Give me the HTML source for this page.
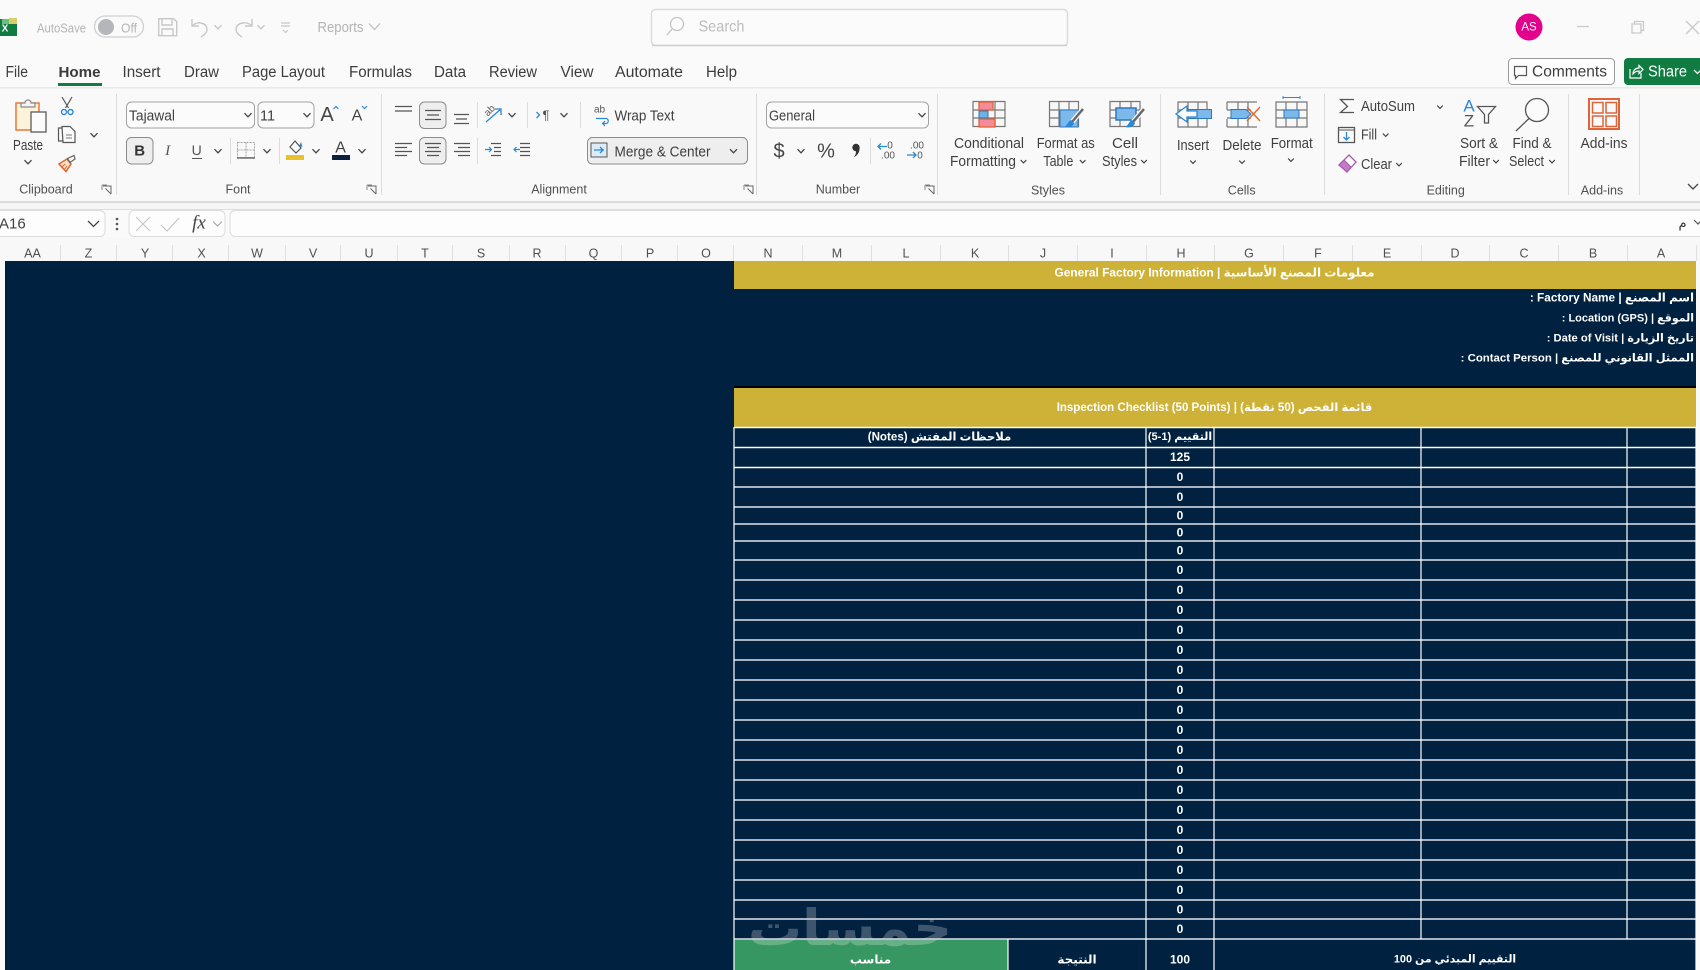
<!DOCTYPE html>
<html lang="en"><head><meta charset="utf-8"><title>Excel</title>
<style>
html,body{margin:0;padding:0;width:1700px;height:970px;overflow:hidden;background:#fafafa}
svg{display:block;position:absolute;left:0;top:0;filter:blur(.3px)}
text{font-family:"Liberation Sans","DejaVu Sans",sans-serif;dominant-baseline:central;white-space:pre}
.m{text-anchor:middle}
.f{fill:#b4b4b4;font-size:13px}
.tab{fill:#3c3c3c;font-size:15.5px}
.r{fill:#404040;font-size:14.5px}
.g{fill:#505050;font-size:12.5px;text-anchor:middle}
.h{fill:#505050;font-size:12.5px;text-anchor:middle}
.w{fill:#fff;font-size:12px;font-weight:bold;font-family:"Liberation Sans","DejaVu Sans",sans-serif}
.n{fill:#fff;font-size:12px;font-weight:bold;text-anchor:middle}
</style></head><body>
<svg width="1700" height="970" viewBox="0 0 1700 970" xmlns="http://www.w3.org/2000/svg">
<defs>
<path id="c" d="M-3.500-1.800L0 1.800L3.500-1.800" fill="none" stroke="#444" stroke-width="1.300"/>
<path id="cs" d="M-2.800-1.400L0 1.400L2.800-1.400" fill="none" stroke="#444" stroke-width="1.200"/>
<path id="cf" d="M-3.500-1.800L0 1.800L3.500-1.800" fill="none" stroke="#c4c4c4" stroke-width="1.300"/>
<g id="l"><path d="M0 0h8v8M8 8L2.500 2.500" fill="none" stroke="#666" stroke-width="1"/><path d="M-1-1h5M-1-1v5" fill="none" stroke="#888" stroke-width="1"/></g>
</defs>

<!-- page base -->
<rect width="1700" height="970" fill="#fafafa"/>

<!-- title bar -->
<rect x="0" y="19" width="17" height="17" fill="#107c41"/>
<rect x="9" y="18" width="8" height="6" fill="#d9cf6a"/>
<rect x="2" y="19" width="7" height="5" fill="#6cbf84"/>
<text x="5" y="29" fill="#fff" class="m" style="font-size:10px;font-weight:bold">X</text>
<text x="37" y="28" class="f" textLength="49" lengthAdjust="spacingAndGlyphs">AutoSave</text>
<rect x="94.500" y="16" width="49" height="21" rx="10.500" fill="#fafafa" stroke="#cfcfcf" stroke-width="1.300"/>
<circle cx="106" cy="27" r="8" fill="#b4b6b9"/>
<text x="121" y="28" class="f" textLength="16" lengthAdjust="spacingAndGlyphs">Off</text>
<path d="M158.700 18.700h15l3 3v14h-18zM162 19v6h10v-6M162 36v-7h11v7" fill="none" stroke="#c8c8c8" stroke-width="1.400"/>
<path d="M192 19v7h7M192 26c5-5 14-4 15 3c0 4-3 6-6 8" fill="none" stroke="#c8c8c8" stroke-width="1.400"/>
<use href="#cf" x="218" y="27"/>
<path d="M252 19v7h-7M252 26c-5-5-15-4-16 3c0 4 3 6 6 8" fill="none" stroke="#c8c8c8" stroke-width="1.400"/>
<use href="#cf" x="261" y="27"/>
<path d="M281 23h9M281 26h9M283 30l2.500 2.500l2.500-2.500" fill="none" stroke="#c8c8c8" stroke-width="1.200"/>
<text x="317.500" y="28" class="f" style="font-size:14.500px" textLength="46" lengthAdjust="spacingAndGlyphs">Reports</text>
<path d="M369 23.500l5.500 6l5.500-6" fill="none" stroke="#c4c4c4" stroke-width="1.300"/>

<!-- search -->
<rect x="651.500" y="9.500" width="416" height="36" rx="4" fill="#fbfbfb" stroke="#dcdcdc" stroke-width="1.500"/>
<path d="M652 45.500h415" stroke="#cfcfcf" stroke-width="1.500"/>
<circle cx="677" cy="24" r="6.500" fill="none" stroke="#c4c4c4" stroke-width="1.300"/>
<path d="M672 29l-5 6" stroke="#c4c4c4" stroke-width="1.300"/>
<text x="698.500" y="27" fill="#bcbcbc" style="font-size:16px" textLength="46" lengthAdjust="spacingAndGlyphs">Search</text>

<!-- window right -->
<circle cx="1529" cy="27" r="13.500" fill="#e3008c"/>
<text x="1529" y="27.500" class="m" fill="#fff" style="font-size:11.500px">AS</text>
<path d="M1577 26.500h12" stroke="#cacaca" stroke-width="1.300"/>
<path d="M1632 24h9v9h-9zM1634.500 24v-2.500h9v9h-2.500" fill="none" stroke="#cacaca" stroke-width="1.300"/>
<path d="M1686 21l13 13M1699 21l-13 13" stroke="#cacaca" stroke-width="1.300"/>

<!-- tabs -->
<text class="tab" x="5.500" y="72.500" textLength="22.500" lengthAdjust="spacingAndGlyphs">File</text>
<text class="tab" x="58.500" y="72.500" textLength="42" lengthAdjust="spacingAndGlyphs" style="font-weight:bold;fill:#3a3a3a;font-size:15px">Home</text>
<text class="tab" x="122.500" y="72.500" textLength="38" lengthAdjust="spacingAndGlyphs">Insert</text>
<text class="tab" x="184" y="72.500" textLength="35" lengthAdjust="spacingAndGlyphs">Draw</text>
<text class="tab" x="242" y="72.500" textLength="83" lengthAdjust="spacingAndGlyphs">Page Layout</text>
<text class="tab" x="349" y="72.500" textLength="63" lengthAdjust="spacingAndGlyphs">Formulas</text>
<text class="tab" x="434" y="72.500" textLength="32" lengthAdjust="spacingAndGlyphs">Data</text>
<text class="tab" x="489" y="72.500" textLength="48" lengthAdjust="spacingAndGlyphs">Review</text>
<text class="tab" x="560.500" y="72.500" textLength="33" lengthAdjust="spacingAndGlyphs">View</text>
<text class="tab" x="615" y="72.500" textLength="68" lengthAdjust="spacingAndGlyphs">Automate</text>
<text class="tab" x="706" y="72.500" textLength="31" lengthAdjust="spacingAndGlyphs">Help</text>
<rect x="58" y="83" width="44" height="3" fill="#107c41"/>

<!-- comments & share -->
<rect x="1508.500" y="58.500" width="106" height="26" rx="4" fill="#fdfdfd" stroke="#9a9a9a"/>
<path d="M1514.500 66.500h12v9h-8l-3 3v-3h-1z" fill="none" stroke="#555" stroke-width="1.200"/>
<text x="1532" y="72" class="tab" textLength="75" lengthAdjust="spacingAndGlyphs">Comments</text>
<rect x="1624" y="58" width="90" height="27" rx="4" fill="#107c41"/>
<path d="M1630 69v9h11v-5M1633 74c0-4 3-6 6-6v-2.500l4 4l-4 4v-2.500c-3 0-4 1-6 3z" fill="none" stroke="#fff" stroke-width="1.200"/>
<text x="1648" y="72" class="tab" style="fill:#fff" textLength="39" lengthAdjust="spacingAndGlyphs">Share</text>
<path d="M1694 70l3.500 3.500l3.500-3.500" fill="none" stroke="#fff" stroke-width="1.300"/>

<!-- ribbon -->
<rect x="0" y="87" width="1700" height="114" fill="#f9f9f9"/>
<rect x="0" y="87" width="1700" height="1.500" fill="#e9e9e9"/>
<rect x="0" y="201" width="1700" height="2" fill="#dcdcdc"/>
<rect x="0" y="203" width="1700" height="6" fill="#f5f5f5"/>
<rect x="0" y="209" width="1700" height="1" fill="#dedede"/>
<g fill="#dcdcdc">
<rect x="116" y="94" width="1" height="101"/><rect x="381" y="94" width="1" height="101"/>
<rect x="756" y="94" width="1" height="101"/><rect x="937" y="94" width="1" height="101"/>
<rect x="1160" y="94" width="1" height="101"/><rect x="1324" y="94" width="1" height="101"/>
<rect x="1568" y="94" width="1" height="101"/><rect x="1639" y="94" width="1" height="101"/>
<rect x="230" y="138" width="1" height="26"/><rect x="279" y="138" width="1" height="26"/>
<rect x="477" y="102" width="1" height="26"/><rect x="477" y="138" width="1" height="26"/>
<rect x="527" y="102" width="1" height="26"/><rect x="580" y="102" width="1" height="26"/>
<rect x="870" y="138" width="1" height="26"/>
</g>

<!-- clipboard -->
<rect x="16" y="103" width="23" height="27" fill="#fdf3d8" stroke="#e57a3a" stroke-width="1.500"/>
<path d="M21 107v-4h4c0-4 6-4 6 0h4v4z" fill="#f5f5f5" stroke="#8a8a8a" stroke-width="1.200"/>
<rect x="31" y="112" width="15" height="20" fill="#fbfbfb" stroke="#666" stroke-width="1.400"/>
<text x="28" y="146" class="r m" textLength="30" lengthAdjust="spacingAndGlyphs">Paste</text>
<use href="#c" x="28" y="162"/>
<path d="M62 97l6.500 11M72 97l-6.500 11" fill="none" stroke="#555" stroke-width="1.200"/>
<circle cx="64" cy="112" r="2.500" fill="none" stroke="#2b88d8" stroke-width="1.400"/>
<circle cx="70.500" cy="112" r="2.500" fill="none" stroke="#2b88d8" stroke-width="1.400"/>
<path d="M62 128h-3.500v13h5M62 126.500h8l5 5v11h-12z" fill="#fbfbfb" stroke="#555" stroke-width="1.200"/>
<path d="M66 135h6M66 138h6" stroke="#777"/>
<use href="#c" x="94" y="135"/>
<path d="M59 164l8-5l4 5l-5 7.500z" fill="#fbe3cf" stroke="#e0662b" stroke-width="1.500"/>
<path d="M62 167l3-3M64 170l3-4" stroke="#e0662b"/>
<path d="M67.500 158.500l2.500 4l5-3.500l-1-3.500z" fill="#f5f5f5" stroke="#666" stroke-width="1.200"/>
<text x="46" y="189.500" class="g">Clipboard</text>
<use href="#l" x="103" y="186"/>

<!-- font -->
<rect x="126.500" y="102" width="128" height="26" rx="5" fill="#fbfbfb" stroke="#a2a2a2"/>
<rect x="258" y="102" width="56" height="26" rx="5" fill="#fbfbfb" stroke="#a2a2a2"/>
<text x="129" y="116.500" class="r" textLength="46" lengthAdjust="spacingAndGlyphs">Tajawal</text>
<text x="260" y="116.500" class="r">11</text>
<use href="#c" x="248" y="115"/><use href="#c" x="307" y="115"/>
<text x="327" y="115" class="m" fill="#444" style="font-size:20px">A</text>
<path d="M333.500 109l2.500-2.500l2.500 2.500" fill="none" stroke="#2b88d8" stroke-width="1.200"/>
<text x="357" y="116" class="m" fill="#444" style="font-size:16px">A</text>
<path d="M362 106l2.500 2.500l2.500-2.500" fill="none" stroke="#2b88d8" stroke-width="1.200"/>
<rect x="126.500" y="137.500" width="26.500" height="26.500" rx="5" fill="#eeeeee" stroke="#8c8c8c"/>
<text x="139.700" y="151" class="m" fill="#333" style="font-size:15px;font-weight:bold">B</text>
<text x="167.600" y="151" class="m" fill="#555" style="font-size:15px;font-style:italic;font-family:'Liberation Serif',serif">I</text>
<text x="196.700" y="150" class="m" fill="#555" style="font-size:14px">U</text>
<path d="M192 158.500h10" stroke="#555"/>
<use href="#c" x="218" y="151"/>
<path d="M237.500 142.500h17v15h-17zM246 142.500v15M237.500 150h17" fill="none" stroke="#a8a8a8" stroke-dasharray="2 1"/>
<path d="M237 158h18" stroke="#555" stroke-width="1.300"/>
<use href="#c" x="267" y="151"/>
<path d="M295 141l6 7l-5 5l-6-6z" fill="#fbfbfb" stroke="#555" stroke-width="1.200"/>
<path d="M299 146l2-4l1.500 5z" fill="#2b88d8"/>
<rect x="286" y="155" width="18" height="5" fill="#e8c22c"/>
<use href="#c" x="316" y="151"/>
<text x="340.600" y="148" class="m" fill="#444" style="font-size:16px">A</text>
<rect x="332" y="155" width="18" height="5" fill="#0a2240"/>
<use href="#c" x="362" y="151"/>
<text x="238" y="189.500" class="g">Font</text>
<use href="#l" x="368" y="186"/>

<!-- alignment -->
<rect x="419.500" y="102" width="26.500" height="26.500" rx="5" fill="#eeeeee" stroke="#8c8c8c"/>
<rect x="419.500" y="137.500" width="26.500" height="26.500" rx="5" fill="#eeeeee" stroke="#8c8c8c"/>
<path d="M395 106.500h17M395 111h17M395 116h0" stroke="#555" stroke-width="1.200"/>
<path d="M425 110.500h16M427 115h12M425 119.500h16" stroke="#555" stroke-width="1.200"/>
<path d="M454 114.500h15M456 119h11M454 123.500h15" stroke="#555" stroke-width="1.200"/>
<path d="M395 143.500h17M395 147.500h12M395 151.500h17M395 155.500h12" stroke="#555" stroke-width="1.200"/>
<path d="M425 143.500h16M427 147.500h12M425 151.500h16M427 155.500h12" stroke="#555" stroke-width="1.200"/>
<path d="M454 143.500h16M458 147.500h12M454 151.500h16M458 155.500h12" stroke="#555" stroke-width="1.200"/>
<path d="M486 122l15-13M495 109h6v6" fill="none" stroke="#2b88d8" stroke-width="1.300"/>
<text x="490" y="111" class="m" fill="#555" transform="rotate(-45 490 111)" style="font-size:10px">ab</text>
<use href="#c" x="512" y="115"/>
<path d="M536.500 112l3 3l-3 3" fill="none" stroke="#2b88d8" stroke-width="1.300"/>
<text x="546" y="115" class="m" fill="#555" style="font-size:13px">¶</text>
<use href="#c" x="564" y="115"/>
<path d="M491 143.500h10M494 147.500h7M494 151.500h7M491 155.500h10" stroke="#555" stroke-width="1.200"/>
<path d="M485 149.500h6M489 147l2.500 2.500l-2.500 2.500" fill="none" stroke="#2b88d8" stroke-width="1.200"/>
<path d="M520 143.500h10M520 147.500h10M520 151.500h10M520 155.500h10" stroke="#555" stroke-width="1.200"/>
<path d="M514 149.500h6M516.500 147l-2.500 2.500l2.500 2.500" fill="none" stroke="#2b88d8" stroke-width="1.200"/>
<text x="594" y="110" fill="#555" style="font-size:10px">ab</text>
<path d="M596 118.500h10c3 0 3 5 0 5h-3M605 121l-2.500 2.500l2.500 2.500" fill="none" stroke="#2b88d8" stroke-width="1.200"/>
<text x="614.500" y="116.500" class="r" textLength="60" lengthAdjust="spacingAndGlyphs">Wrap Text</text>
<rect x="587.500" y="137.500" width="160" height="26.500" rx="5" fill="#eeeeee" stroke="#8c8c8c"/>
<rect x="591" y="143" width="16" height="14" fill="#ddeaf7" stroke="#555"/>
<path d="M594 150h10M600 147l3 3l-3 3" fill="none" stroke="#2b88d8" stroke-width="1.300"/>
<text x="614.500" y="152.500" class="r" textLength="96" lengthAdjust="spacingAndGlyphs">Merge &amp; Center</text>
<use href="#c" x="733.500" y="151"/>
<text x="559" y="189.500" class="g">Alignment</text>
<use href="#l" x="745" y="186"/>

<!-- number -->
<rect x="766.500" y="102" width="162" height="26" rx="5" fill="#fbfbfb" stroke="#a2a2a2"/>
<text x="769" y="116.500" class="r" textLength="46" lengthAdjust="spacingAndGlyphs">General</text>
<use href="#c" x="922" y="115"/>
<text x="779" y="151.500" class="m" fill="#444" style="font-size:20px">$</text>
<use href="#c" x="801" y="151"/>
<text x="826" y="151.500" class="m" fill="#444" style="font-size:20px">%</text>
<circle cx="856" cy="147.500" r="3.700" fill="#333"/>
<path d="M859.500 148c.3 4-2 7.500-6 9.500c2.200-2.500 2.800-4.500 2.300-7z" fill="#333"/>
<text x="890" y="146" class="m" fill="#555" style="font-size:10px">0</text>
<text x="888" y="156" class="m" fill="#555" style="font-size:10px">.00</text>
<path d="M878 146.500h9M881 143.500l-3 3l3 3" fill="none" stroke="#2b88d8" stroke-width="1.300"/>
<text x="917" y="146" class="m" fill="#555" style="font-size:10px">.00</text>
<text x="920" y="156" class="m" fill="#555" style="font-size:10px">0</text>
<path d="M907 155h9M913 152l3 3l-3 3" fill="none" stroke="#2b88d8" stroke-width="1.300"/>
<text x="838" y="189.500" class="g">Number</text>
<use href="#l" x="926" y="186"/>

<!-- styles -->
<path d="M973 101.500h32v25h-32zM973 110h32M973 118h32M985 101.500v25M995 101.500v25" fill="#f7f7f7" stroke="#777" stroke-width="1.200"/>
<rect x="979" y="102" width="14" height="8" fill="#f58b99" stroke="#e4632f" stroke-width="1.300"/>
<rect x="979" y="119" width="16" height="8" fill="#f58b99" stroke="#e4632f" stroke-width="1.300"/>
<rect x="979" y="111" width="9" height="7" fill="#6fb1e6" stroke="#2b78c2"/>
<text x="989" y="144" class="r m" textLength="70" lengthAdjust="spacingAndGlyphs">Conditional</text>
<text x="950" y="162" class="r" textLength="66" lengthAdjust="spacingAndGlyphs">Formatting</text>
<use href="#cs" x="1023.500" y="161.500"/>
<path d="M1049.500 101.500h29v25h-29zM1049.500 110h29M1049.500 118h29M1059 101.500v25M1069 101.500v25" fill="#f7f7f7" stroke="#777" stroke-width="1.200"/>
<rect x="1060" y="110" width="18" height="17" fill="#7db8ea" stroke="#2b78c2"/>
<path d="M1083 109l-11 13" stroke="#f7f7f7" stroke-width="5"/>
<path d="M1083 109l-11 13" stroke="#666" stroke-width="2.500"/>
<path d="M1071 120c-3 1-3 5-7 7c4 1 9 0 10-4z" fill="#2b88d8"/>
<text x="1065.700" y="144" class="r m" textLength="58" lengthAdjust="spacingAndGlyphs">Format as</text>
<text x="1058.300" y="162" class="r m" textLength="30" lengthAdjust="spacingAndGlyphs">Table</text>
<use href="#cs" x="1082.700" y="161.500"/>
<path d="M1110 101.500h30v25h-30zM1110 110h30M1110 118h30M1120 101.500v25M1131 101.500v25" fill="#f7f7f7" stroke="#777" stroke-width="1.200"/>
<rect x="1116" y="108" width="20" height="12" fill="#7db8ea" stroke="#2b78c2" stroke-width="1.500"/>
<path d="M1144 109l-11 13" stroke="#f7f7f7" stroke-width="5"/>
<path d="M1144 109l-11 13" stroke="#666" stroke-width="2.500"/>
<path d="M1132 120c-3 1-3 5-7 7c4 1 9 0 10-4z" fill="#2b88d8"/>
<text x="1125" y="144" class="r m" textLength="26" lengthAdjust="spacingAndGlyphs">Cell</text>
<text x="1102" y="162" class="r" textLength="35" lengthAdjust="spacingAndGlyphs">Styles</text>
<use href="#cs" x="1144" y="161.500"/>
<text x="1048" y="190.500" class="g">Styles</text>

<!-- cells -->
<path d="M1178 102h29v25h-29zM1178 110h29M1178 118h29M1188 102v25M1198 102v25" fill="#f7f7f7" stroke="#777" stroke-width="1.200"/>
<rect x="1188" y="109.500" width="23.500" height="9" fill="#7db8ea" stroke="#2b78c2"/>
<path d="M1187 106l-11 8l11 8v-5h10v-6h-10z" fill="#fbfbfb" stroke="#2b88d8" stroke-width="1.300"/>
<text x="1193" y="146" class="r m" textLength="32" lengthAdjust="spacingAndGlyphs">Insert</text>
<use href="#cs" x="1193" y="162"/>
<path d="M1227 102h30M1227 127h30M1227 102v8M1227 119v8M1238 102v8M1238 119v8M1248 102v8M1248 119v8M1227 110h24M1227 118h24" fill="none" stroke="#777" stroke-width="1.200"/>
<path d="M1231 109.500h15l5 4.500l-5 4.500h-15z" fill="#7db8ea" stroke="#2b78c2"/>
<path d="M1247 107l13 14M1260 107l-13 14" stroke="#e4632f" stroke-width="1.300"/>
<text x="1242" y="146" class="r m" textLength="39" lengthAdjust="spacingAndGlyphs">Delete</text>
<use href="#cs" x="1242" y="162"/>
<path d="M1276 102h31v25h-31zM1276 110h31M1276 118h31M1286 102v25M1297 102v25" fill="#f7f7f7" stroke="#777" stroke-width="1.200"/>
<rect x="1284" y="110" width="15" height="8" fill="#7db8ea" stroke="#2b78c2"/>
<path d="M1283 97.500h17M1283 96v3M1300 96v3" stroke="#2b88d8"/>
<text x="1291.700" y="144" class="r m" textLength="42" lengthAdjust="spacingAndGlyphs">Format</text>
<use href="#cs" x="1291" y="160"/>
<text x="1241.700" y="190.500" class="g">Cells</text>

<!-- editing -->
<path d="M1354 99.500h-13.500l7 7l-7 6h13.500" fill="none" stroke="#555" stroke-width="1.300"/>
<text x="1361" y="107" class="r" textLength="54" lengthAdjust="spacingAndGlyphs">AutoSum</text>
<use href="#cs" x="1440" y="107"/>
<rect x="1338.500" y="127.500" width="16" height="15" fill="#fbfbfb" stroke="#555" stroke-width="1.300"/>
<path d="M1338.500 130h16" stroke="#555"/>
<path d="M1346.500 132v8M1343.500 137l3 3l3-3" fill="none" stroke="#2b88d8" stroke-width="1.300"/>
<text x="1361" y="135.500" class="r" textLength="16" lengthAdjust="spacingAndGlyphs">Fill</text>
<use href="#cs" x="1385.700" y="135"/>
<path d="M1349 155l7 7l-9 10l-8-7z" fill="#fbfbfb" stroke="#a65aa8" stroke-width="1.300"/>
<path d="M1344 160l7 7l-4 5l-8-7z" fill="#c07cc4" stroke="#a65aa8"/>
<text x="1361" y="165" class="r" textLength="31" lengthAdjust="spacingAndGlyphs">Clear</text>
<use href="#cs" x="1399" y="164.500"/>
<text x="1469" y="106" class="m" fill="#2b88d8" style="font-size:17px">A</text>
<text x="1469" y="121" class="m" fill="#555" style="font-size:17px">Z</text>
<path d="M1477.500 106.500h18l-7 8v8.500h-4v-8.500z" fill="#fbfbfb" stroke="#555" stroke-width="1.300"/>
<text x="1479" y="144" class="r m" textLength="38" lengthAdjust="spacingAndGlyphs">Sort &amp;</text>
<text x="1459" y="162" class="r" textLength="31" lengthAdjust="spacingAndGlyphs">Filter</text>
<use href="#cs" x="1496" y="161.500"/>
<circle cx="1537" cy="110" r="11.500" fill="#fbfbfb" stroke="#555" stroke-width="1.300"/>
<path d="M1529 118.500l-13 12.500" stroke="#555" stroke-width="1.300"/>
<text x="1532" y="144" class="r m" textLength="39" lengthAdjust="spacingAndGlyphs">Find &amp;</text>
<text x="1509" y="162" class="r" textLength="35" lengthAdjust="spacingAndGlyphs">Select</text>
<use href="#cs" x="1552" y="161.500"/>
<text x="1445.700" y="190.500" class="g">Editing</text>

<!-- add-ins -->
<rect x="1589" y="99" width="30" height="30" fill="none" stroke="#e0643a" stroke-width="2"/>
<rect x="1592.500" y="102.500" width="10.500" height="10.500" fill="none" stroke="#e0643a" stroke-width="1.500"/>
<rect x="1606" y="102.500" width="10.500" height="10.500" fill="none" stroke="#e0643a" stroke-width="1.500"/>
<rect x="1592.500" y="116" width="10.500" height="10.500" fill="none" stroke="#e0643a" stroke-width="1.500"/>
<rect x="1606" y="116" width="10.500" height="10.500" fill="none" stroke="#e0643a" stroke-width="1.500"/>
<text x="1604" y="144" class="r m" textLength="47" lengthAdjust="spacingAndGlyphs">Add-ins</text>
<text x="1602" y="190.500" class="g">Add-ins</text>
<path d="M1688 184l5 5l5-5" fill="none" stroke="#444" stroke-width="1.300"/>

<!-- formula bar -->
<rect x="-6" y="210.500" width="111" height="26" rx="5" fill="#fdfdfd" stroke="#dcdcdc"/>
<text x="-1" y="224" class="r" style="font-size:15px">A16</text>
<path d="M88 221l5.500 5.500l5.500-5.500" fill="none" stroke="#444" stroke-width="1.300"/>
<circle cx="117" cy="219" r="1.300" fill="#555"/><circle cx="117" cy="224" r="1.300" fill="#555"/><circle cx="117" cy="229" r="1.300" fill="#555"/>
<rect x="129" y="210.500" width="96" height="26" rx="5" fill="#fdfdfd" stroke="#dcdcdc"/>
<path d="M136 217l14 14M150 217l-14 14" stroke="#c6c6c6" stroke-width="1.200"/>
<path d="M161 225l6 6l12-13" fill="none" stroke="#c6c6c6" stroke-width="1.200"/>
<text x="199" y="223" class="m" fill="#444" style="font-size:19px;font-style:italic;font-family:'Liberation Serif',serif">fx</text>
<path d="M213 221.500l4.500 4.500l4.500-4.500" fill="none" stroke="#aaa" stroke-width="1.200"/>
<rect x="230" y="210.500" width="1480" height="26" rx="5" fill="#fdfdfd" stroke="#dcdcdc"/>
<text x="1682.500" y="224" class="m" fill="#333" style="font-size:13px;font-family:'DejaVu Sans',sans-serif">م</text>
<path d="M1694 220l4 4l4-4" fill="none" stroke="#555" stroke-width="1.200"/>

<!-- column header row -->
<rect x="0" y="237" width="1700" height="24" fill="#f8f8f8"/>
<path d="M60.500 245v16M116.500 245v16M172.500 245v16M228.500 245v16M285.500 245v16M340.500 245v16M397.500 245v16M452.500 245v16M509.500 245v16M565.500 245v16M621.500 245v16M677.500 245v16M733.500 245v16M802.500 245v16M871.500 245v16M940.500 245v16M1008.500 245v16M1077.500 245v16M1146.500 245v16M1214.500 245v16M1283.500 245v16M1352.500 245v16M1421.500 245v16M1489.500 245v16M1558.500 245v16M1627.500 245v16M1696.500 245v16" stroke="#dfdfdf"/>
<text class="h" x="32.500" y="253.500">AA</text><text class="h" x="88.500" y="253.500">Z</text><text class="h" x="145" y="253.500">Y</text><text class="h" x="201.500" y="253.500">X</text>
<text class="h" x="257" y="253.500">W</text><text class="h" x="313" y="253.500">V</text><text class="h" x="369" y="253.500">U</text><text class="h" x="425" y="253.500">T</text>
<text class="h" x="481" y="253.500">S</text><text class="h" x="537" y="253.500">R</text><text class="h" x="593.500" y="253.500">Q</text><text class="h" x="650" y="253.500">P</text>
<text class="h" x="706" y="253.500">O</text><text class="h" x="768" y="253.500">N</text><text class="h" x="837" y="253.500">M</text><text class="h" x="906" y="253.500">L</text>
<text class="h" x="975" y="253.500">K</text><text class="h" x="1043" y="253.500">J</text><text class="h" x="1112" y="253.500">I</text><text class="h" x="1181" y="253.500">H</text>
<text class="h" x="1249" y="253.500">G</text><text class="h" x="1318" y="253.500">F</text><text class="h" x="1387" y="253.500">E</text><text class="h" x="1455" y="253.500">D</text>
<text class="h" x="1524" y="253.500">C</text><text class="h" x="1593" y="253.500">B</text><text class="h" x="1661" y="253.500">A</text>

<!-- sheet -->
<rect x="5" y="261" width="1691" height="709" fill="#00213f"/>
<rect x="734" y="261" width="962" height="28" fill="#ceb238"/>
<rect x="734" y="388" width="962" height="39" fill="#ceb238"/>
<rect x="734" y="386" width="962" height="2" fill="#000"/>
<rect x="734" y="939" width="274" height="31" fill="#379763"/>

<!-- watermark -->
<text x="952" y="928" direction="rtl" fill="#fff" opacity=".24" textLength="204" lengthAdjust="spacingAndGlyphs" style="font-size:50px;font-weight:bold;font-family:'DejaVu Sans',sans-serif;text-anchor:start">خمسات</text>

<!-- grid lines -->
<path d="M734 427.500h962M734 447.500h962M734 467.500h962" stroke="#fff" stroke-width="1.500"/>
<path d="M734 487h962M734 507h962M734 524h962M734 541h962M734 560h962M734 580h962M734 600h962M734 620h962M734 640h962M734 660h962M734 680h962M734 700h962M734 720h962M734 740h962M734 760h962M734 780h962M734 800h962M734 820h962M734 840h962M734 860h962M734 880h962M734 900h962M734 919h962M734 939h962" stroke="#c2c9d2" stroke-width="1.800"/>
<path d="M734 427v543M1146 427v543M1214 427v543M1421 427v512M1627 427v512M1696 427v543M1008 939v31" stroke="#fff" stroke-width="1.200"/>

<!-- sheet text -->
<text class="w m" x="1214.500" y="272.500" direction="rtl" style="text-anchor:middle;font-size:11.900px">معلومات المصنع الأساسية | General Factory Information</text>
<text class="w" x="1694" y="297.500" direction="rtl" style="text-anchor:start;font-size:11.800px">اسم المصنع | Factory Name :</text>
<text class="w" x="1694" y="318.500" direction="rtl" style="text-anchor:start;font-size:11px">الموقع | Location (GPS) :</text>
<text class="w" x="1694" y="338.500" direction="rtl" style="text-anchor:start;font-size:11.200px">تاريخ الزيارة | Date of Visit :</text>
<text class="w" x="1694" y="358.500" direction="rtl" style="text-anchor:start;font-size:11.400px">الممثل القانوني للمصنع | Contact Person :</text>
<text class="w m" x="1214.500" y="408" direction="rtl" style="text-anchor:middle;font-size:11.500px">قائمة الفحص (50 نقطة) | Inspection Checklist (50 Points)</text>
<text class="w m" x="939.500" y="437" direction="rtl" style="text-anchor:middle;font-size:11.600px">ملاحظات المفتش (Notes)</text>
<text class="w m" x="1180" y="437" direction="rtl" style="text-anchor:middle;font-size:11px">التقييم (1-5)</text>
<text class="n" x="1180" y="457">125</text>
<text class="n" x="1180" y="477">0</text><text class="n" x="1180" y="497">0</text><text class="n" x="1180" y="515.500">0</text><text class="n" x="1180" y="532.500">0</text>
<text class="n" x="1180" y="550.500">0</text><text class="n" x="1180" y="570">0</text><text class="n" x="1180" y="590">0</text><text class="n" x="1180" y="610">0</text>
<text class="n" x="1180" y="630">0</text><text class="n" x="1180" y="650">0</text><text class="n" x="1180" y="670">0</text><text class="n" x="1180" y="690">0</text>
<text class="n" x="1180" y="710">0</text><text class="n" x="1180" y="730">0</text><text class="n" x="1180" y="750">0</text><text class="n" x="1180" y="770">0</text>
<text class="n" x="1180" y="790">0</text><text class="n" x="1180" y="810">0</text><text class="n" x="1180" y="830">0</text><text class="n" x="1180" y="850">0</text>
<text class="n" x="1180" y="870">0</text><text class="n" x="1180" y="890">0</text><text class="n" x="1180" y="909.500">0</text><text class="n" x="1180" y="929">0</text>
<text class="w m" x="870.500" y="959.500" direction="rtl" style="text-anchor:middle">مناسب</text>
<text class="w m" x="1077" y="959.500" direction="rtl" style="text-anchor:middle">النتيجة</text>
<text class="n" x="1180" y="959.500">100</text>
<text class="w m" x="1455" y="959.500" direction="rtl" style="text-anchor:middle;font-size:10.900px">التقييم المبدئي من 100</text>
</svg>
</body></html>
